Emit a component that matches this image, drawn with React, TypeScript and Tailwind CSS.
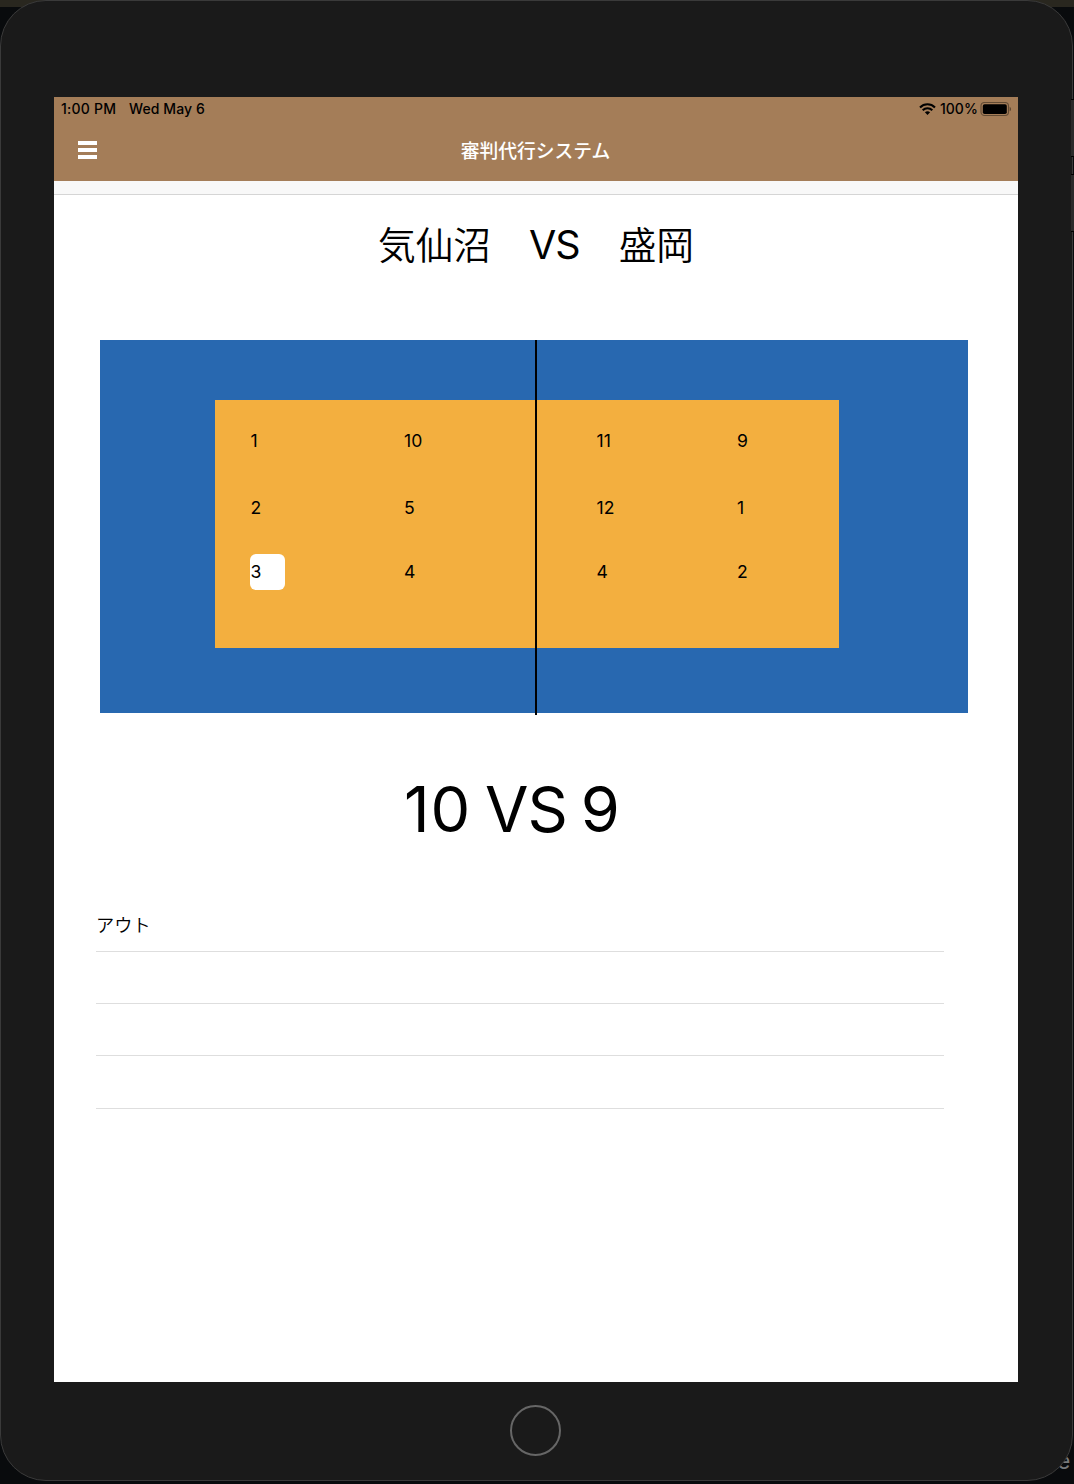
const courtRows = [
  ["1", "10", "11", "9"],
  ["2", "5", "12", "1"],
  ["3", "4", "4", "2"],
];

const logEntries = ["アウト", "", "", ""];

function WifiIcon() {
  return (
    <svg className="h-[12px] w-[17px]" viewBox="0 0 17 12" fill="none" stroke="#000" strokeWidth="2.100">
      <path d="M1 4.400C5.200.2 11.800.2 16 4.400" />
      <path d="M3.700 7.200c2.700-2.600 6.900-2.600 9.600 0" />
      <path d="M8.500 11.900 5.900 9.300c1.500-1.300 3.700-1.300 5.200 0z" fill="#000" stroke="none" />
    </svg>
  );
}

function BatteryIcon() {
  return (
    <svg className="h-[15px] w-[32px]" viewBox="0 0 32 15">
      <rect x="1" y=".5" width="27.500" height="13" rx="3.500" fill="none" stroke="#000" strokeOpacity=".4" strokeWidth="1.100" />
      <rect x="2.800" y="2.200" width="24" height="9.800" rx="1.800" fill="#000" />
      <path d="M29.700 4.700c1.800.8 1.800 3.800 0 4.600z" fill="#000" fillOpacity=".45" />
    </svg>
  );
}

function StatusBar() {
  return (
    <div className="flex h-6 items-center justify-between pl-[7px] pr-[6px] text-[14px] font-medium leading-6 text-black">
      <div className="flex">
        <span className="w-[68px] tracking-[0.25px]">1:00 PM</span>
        <span className="tracking-[0.1px]">Wed May 6</span>
      </div>
      <div className="flex items-center">
        <WifiIcon />
        <span className="ml-[4px] w-[40px]">100%</span>
        <BatteryIcon />
      </div>
    </div>
  );
}

function NavBar() {
  return (
    <div className="grid h-[60px] grid-cols-[1fr_auto_1fr] items-center">
      <div className="ml-[23.500px] flex w-[19.500px] flex-col gap-[3px] pb-[3px]">
        <span className="h-[4px] bg-white" />
        <span className="h-[4px] bg-white" />
        <span className="h-[4px] bg-white" />
      </div>
      <h1 className="mr-px pt-px text-[18.800px] font-medium leading-6 text-white">審判代行システム</h1>
    </div>
  );
}

function Court() {
  return (
    <div className="relative ml-[46px] mt-[60px] h-[373px] w-[868px] bg-[#2868b0] pl-[115px] pt-[59.500px]">
      <div className="h-[248px] w-[624px] bg-[#f3af3f] pl-[35px] pt-[23px] text-[17.600px] text-black">
        <div className="grid grid-cols-[153.500px_192.500px_140.500px_60px] grid-rows-[67px_64.500px_65px] tracking-[0.2px]">
          {courtRows.map((row, r) =>
            row.map((n, c) => (
              <span
                key={`${r}-${c}`}
                className={
                  r === 2 && c === 0
                    ? "flex h-9 w-[35px] items-center rounded-[6px] bg-white pl-[0.5px] pt-px"
                    : "flex h-9 w-[35px] items-center pl-[0.5px] pt-px"
                }
              >
                {n}
              </span>
            )),
          )}
        </div>
      </div>
      <div className="absolute left-[434.500px] top-0 h-[375px] w-[2px] bg-black" />
    </div>
  );
}

export default function App() {
  return (
    <div className="relative h-[1484px] w-[1074px] overflow-hidden bg-[#090b0d] font-[Inter,'Noto_Sans_CJK_JP',sans-serif]">
      <div className="absolute inset-x-0 top-0 h-[7px] bg-[#29271f]" />
      <span className="absolute left-[1057px] top-[1447px] text-[23px] leading-7 text-[#77797b]">e</span>
      <div className="relative flex h-[1481px] w-[1073px] flex-col items-center rounded-[46px] border border-[#3a3a3a] bg-[#1a1a1a] pt-[96px]">
        <main className="mr-[1px] h-[1285px] w-[964px] shrink-0 bg-white text-black">
          <header className="h-[83.500px] bg-[#a47d58]">
            <StatusBar />
            <NavBar />
          </header>
          <div className="h-[14.500px] border-b border-[#d5d5d5] bg-[#f8f8f8]" />
          <h2 className="mt-[20px] flex h-[65px] justify-center text-[37.700px] font-[350] leading-[60px]">
            <span>気仙沼</span>
            <span className="ml-[38px] mr-[39px] text-[39.500px] font-normal tracking-[-1px]">VS</span>
            <span>盛岡</span>
          </h2>
          <Court />
          <p className="ml-[350px] mt-[56px] h-[80px] text-[63px] leading-[80px] [word-spacing:-4px]">
            <span className="tracking-[1px]">10</span> <span className="tracking-[-1px]">VS</span> 9
          </p>
          <ul className="ml-[42px] mt-[50.500px] w-[848px]">
            {logEntries.map((entry, i) => (
              <li key={i} className="flex h-[52.300px] items-center border-b border-[#dedede] text-[18.200px] font-[350]">
                {entry}
              </li>
            ))}
          </ul>
        </main>
        <div className="mr-[2px] mt-[23px] h-[51px] w-[51px] rounded-full border-2 border-[#666]" />
      </div>
      <div className="absolute left-[1071px] top-[99px] h-[58px] w-[3px] border-y border-black bg-[#2b2b2b]" />
      <div className="absolute left-[1071px] top-[174px] h-[58px] w-[3px] border-y border-black bg-[#2b2b2b]" />
    </div>
  );
}
